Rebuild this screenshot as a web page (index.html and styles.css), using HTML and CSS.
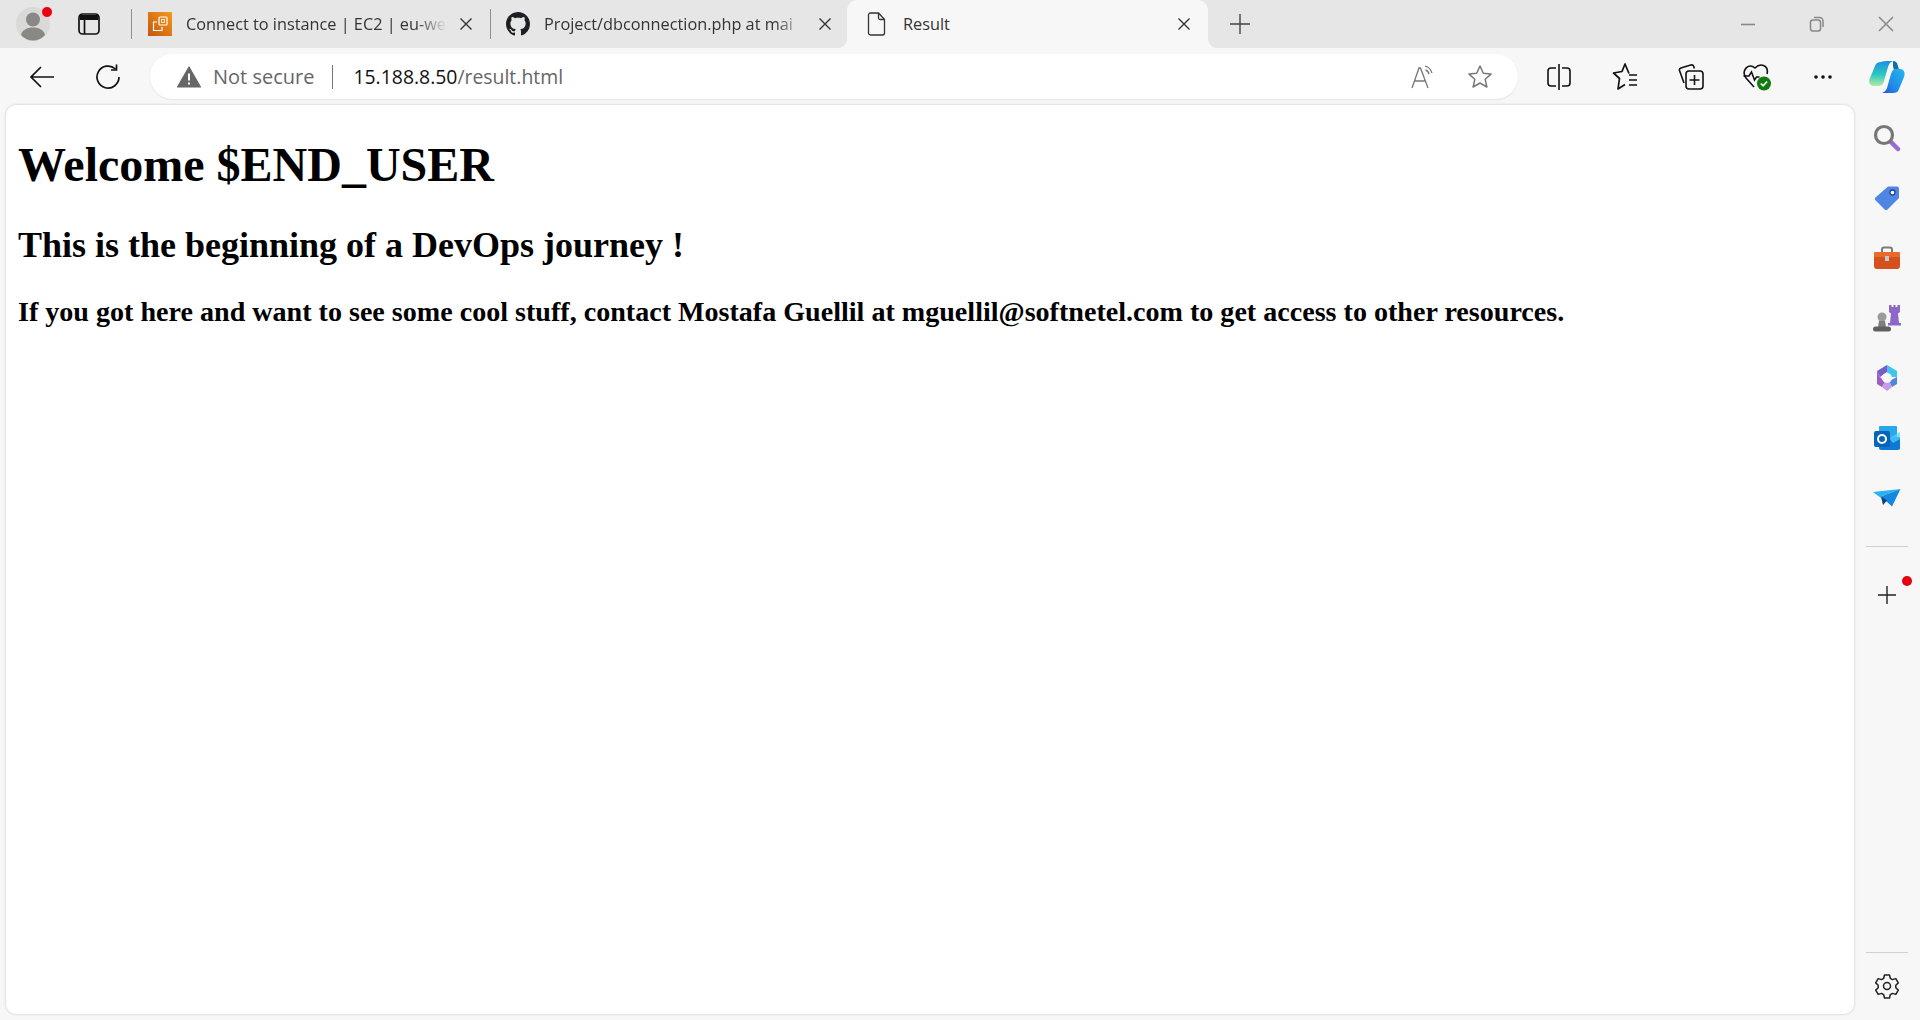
FILE: index.html
```html
<!DOCTYPE html>
<html>

<head>
    <title>Result</title>
    <link rel="stylesheet" href="styles.css">
</head>

<body>
    <div class="tabstrip">
        <div class="strip-btn profile">
            <svg width="38" height="38" viewBox="0 0 38 38">
                <circle cx="18" cy="19" r="17" fill="#d9d9d7" />
                <circle cx="18" cy="14.500" r="7" fill="#8a8885" />
                <path d="M6 30c1-5 6-7.500 12-7.500s11 2.500 12 7.500c-3 3.500-7 5.500-12 5.500S9 33.500 6 30z" fill="#8a8885" />
                <circle cx="32" cy="7" r="5.500" fill="#e60012" stroke="#e6e6e6" stroke-width="1" />
            </svg>
        </div>
        <div class="strip-btn tabs-btn">
            <svg width="22" height="22" viewBox="0 0 22 22" fill="none" stroke="#111" stroke-width="1.700">
                <rect x="1" y="1" width="20" height="20" rx="3.500" />
                <path d="M6.500 7v14" />
                <path d="M2 2h18v5H2z" fill="#111" stroke="none" />
            </svg>
        </div>

        <div class="tab tab-one">
            <svg class="fav" width="24" height="24" viewBox="0 0 24 24" fill="none">
                <defs>
                    <linearGradient id="ec2" x1="0" y1="1" x2="1" y2="0">
                        <stop offset="0" stop-color="#c4570f" />
                        <stop offset="1" stop-color="#f39a1c" />
                    </linearGradient>
                </defs>
                <rect width="24" height="24" fill="url(#ec2)" />
                <rect x="11" y="5" width="8" height="8" rx="1" stroke="#fff" stroke-width="1.200" />
                <rect x="13.500" y="7.500" width="3" height="3" stroke="#fff" stroke-width="0.800" />
                <path d="M9 10H5.500v8.500H14V15" stroke="#fff" stroke-width="1.200" />
            </svg>
            <span class="tab-title">Connect to instance | EC2 | eu-we</span>
            <svg class="close" width="14" height="14" viewBox="0 0 14 14" stroke="#333" stroke-width="1.400">
                <path d="M1.500 1.500l11 11M12.500 1.500l-11 11" />
            </svg>
        </div>
        <div class="tab tab-two">
            <svg class="fav" width="24" height="24" viewBox="0 0 16 16" fill="#1b1f23">
                <path d="M8 0C3.580 0 0 3.580 0 8c0 3.540 2.290 6.530 5.470 7.590.4.070.55-.17.55-.38 0-.19-.01-.82-.01-1.490-2.010.37-2.530-.49-2.690-.94-.09-.23-.48-.94-.82-1.130-.28-.15-.68-.52-.01-.53.63-.01 1.080.58 1.230.82.72 1.210 1.870.87 2.330.66.07-.52.28-.87.51-1.070-1.780-.2-3.640-.89-3.640-3.950 0-.87.31-1.590.82-2.150-.08-.2-.36-1.020.08-2.120 0 0 .67-.21 2.200.82.64-.18 1.320-.27 2-.27s1.360.09 2 .27c1.530-1.040 2.200-.82 2.200-.82.44 1.100.16 1.920.08 2.120.51.56.82 1.270.82 2.150 0 3.070-1.870 3.750-3.650 3.950.29.25.54.73.54 1.480 0 1.070-.01 1.930-.01 2.200 0 .21.15.46.55.38A8.010 8.010 0 0 0 16 8c0-4.420-3.580-8-8-8z" />
            </svg>
            <span class="tab-title">Project/dbconnection.php at mai</span>
            <svg class="close" width="14" height="14" viewBox="0 0 14 14" stroke="#333" stroke-width="1.400">
                <path d="M1.500 1.500l11 11M12.500 1.500l-11 11" />
            </svg>
        </div>
        <div class="tab tab-active">
            <svg class="fav" width="20" height="24" viewBox="0 0 20 24" fill="none" stroke="#333" stroke-width="1.300">
                <path d="M3.500 1h8l6 6.500V21a2 2 0 0 1-2 2h-12a2 2 0 0 1-2-2V3a2 2 0 0 1 2-2z" />
                <path d="M11.500 1v5a1.500 1.500 0 0 0 1.500 1.500h4.500" />
            </svg>
            <span class="tab-title">Result</span>
            <svg class="close" width="14" height="14" viewBox="0 0 14 14" stroke="#333" stroke-width="1.400">
                <path d="M1.500 1.500l11 11M12.500 1.500l-11 11" />
            </svg>
        </div>
        <div class="new-tab">
            <svg width="22" height="22" viewBox="0 0 22 22" stroke="#444" stroke-width="1.400">
                <path d="M11 1v20M1 11h20" />
            </svg>
        </div>

        <div class="window-btns">
            <svg width="16" height="16" viewBox="0 0 16 16" stroke="#888" stroke-width="1.600">
                <path d="M1 8.500h14" />
            </svg>
            <svg width="16" height="18" viewBox="0 0 16 18" fill="none" stroke="#888" stroke-width="1.500">
                <rect x="1.500" y="5" width="10" height="11" rx="2.500" />
                <path d="M5 2.500h5.500A3.500 3.500 0 0 1 14 6v6" />
            </svg>
            <svg width="16" height="16" viewBox="0 0 16 16" stroke="#888" stroke-width="1.500">
                <path d="M1 1l14 14M15 1L1 15" />
            </svg>
        </div>
    </div>

    <div class="toolbar">
        <svg class="nav-back" width="26" height="24" viewBox="0 0 26 24" fill="none" stroke="#111" stroke-width="1.700">
            <path d="M25 12H2M12 2L2 12l10 10" />
        </svg>
        <svg class="nav-reload" width="26" height="26" viewBox="0 0 26 26" fill="none" stroke="#111" stroke-width="1.700">
            <path d="M20.500 5A11 11 0 1 0 24 13" />
            <path d="M21.500 0.500V6H16" />
        </svg>

        <div class="address">
            <svg width="24" height="22" viewBox="0 0 24 22">
                <path d="M12 1L23.500 21H.5z" fill="#666" stroke="#666" stroke-linejoin="round" stroke-width="1.200" />
                <path d="M12 7.500v7M12 16.500v2" stroke="#fff" stroke-width="2" />
            </svg>
            <span class="not-secure">Not secure</span>
            <span class="addr-sep"></span>
            <span class="url"><span class="host">15.188.8.50</span>/result.html</span>
            <svg class="read-aloud" width="24" height="24" viewBox="0 0 24 24" fill="none" stroke="#777" stroke-width="1.300">
                <path d="M1 23L8 3h1.500L17 23M4 16h10.500" />
                <path d="M14 1c3.500 1 6 3.500 7 7M14.500 5c2 .5 3 2 3.500 4" />
            </svg>
            <svg class="star" width="26" height="26" viewBox="0 0 26 26" fill="none" stroke="#777" stroke-width="1.500">
                <path d="M13 2l3.300 7.300 7.700.8-5.800 5.200 1.700 7.700-6.900-4-6.900 4 1.700-7.700L2 10.100l7.700-.8z" stroke-linejoin="round" />
            </svg>
        </div>

        <div class="tools">
            <svg width="24" height="26" viewBox="0 0 24 26" fill="none" stroke="#111" stroke-width="1.600">
                <path d="M12 0v26" />
                <path d="M9 4H4a3 3 0 0 0-3 3v12a3 3 0 0 0 3 3h5M15 4h5a3 3 0 0 1 3 3v12a3 3 0 0 1-3 3h-5" />
            </svg>
            <svg width="26" height="28" viewBox="0 0 26 28" fill="none" stroke="#111" stroke-width="1.700">
                <path d="M17 10.500L13 1l-3 7.500L1.500 10l6 5.500L6 26l7-4.500" stroke-linejoin="round" />
                <path d="M17 12h8M17 17h8M17 22h8" />
            </svg>
            <svg width="26" height="28" viewBox="0 0 26 28" fill="none" stroke="#111" stroke-width="1.600">
                <path d="M6 20L1.500 7.500a2 2 0 0 1 1.300-2.500l10-3a2.500 2.500 0 0 1 3 1.500l.5 2" />
                <rect x="8" y="8" width="17" height="18" rx="3" />
                <path d="M16.500 12v10M11.500 17h10" />
            </svg>
            <svg width="30" height="28" viewBox="0 0 30 28" fill="none">
                <path d="M12 24L4 15C-1 8 6-1 13 5c6-6 14-2 12 6" stroke="#111" stroke-width="1.600" />
                <path d="M1.500 13H7l2.500-4 3 8 2-3h3" stroke="#111" stroke-width="1.500" />
                <circle cx="22" cy="20.500" r="7" fill="#107c10" />
                <path d="M18.800 20.500l2.300 2.300 4-4.300" stroke="#fff" stroke-width="1.700" />
            </svg>
            <svg width="20" height="6" viewBox="0 0 20 6" fill="#111">
                <circle cx="3" cy="3" r="1.800" />
                <circle cx="10" cy="3" r="1.800" />
                <circle cx="17" cy="3" r="1.800" />
            </svg>
        </div>
        <svg class="copilot" width="36" height="32" viewBox="0 0 36 32">
            <defs>
                <linearGradient id="copA" x1="0" y1="0" x2="0" y2="1">
                    <stop offset="0" stop-color="#1d8fe0" />
                    <stop offset="0.55" stop-color="#2dc9c4" />
                    <stop offset="1" stop-color="#b5e9a0" />
                </linearGradient>
                <linearGradient id="copB" x1="1" y1="0" x2="0" y2="1">
                    <stop offset="0" stop-color="#27b6f0" />
                    <stop offset="0.6" stop-color="#1f8ce8" />
                    <stop offset="1" stop-color="#2457d0" />
                </linearGradient>
            </defs>
            <path d="M24 0c2.500 0 4 1.500 4.500 3.500L30 9h-5l-1-4z" fill="#0f6f9e" />
            <path d="M12 1c2-1 4-1 12-1-3 1-4 3-5 6l-4 14c-1 4-3 5-6 5H5c-4 0-6-4-4-8L6 5c1-3 3-4 6-4z" fill="url(#copA)" />
            <path d="M27 8h4c4 0 5.500 4 4 8l-5 12c-1 3-3 4-6 4H13c3-1 4-3 5-5l4-14c1-3 2-5 5-5z" fill="url(#copB)" />
        </svg>
    </div>

    <div class="main">
        <div class="page">
            <h1>Welcome $END_USER</h1>
            <h2>This is the beginning of a DevOps journey !</h2>
            <h3>If you got here and want to see some cool stuff, contact Mostafa Guellil at mguellil@softnetel.com to get access to other resources.</h3>
        </div>

        <div class="sidebar">
            <div class="side-apps">
                <div class="side-icon">
                    <svg width="28" height="28" viewBox="0 0 28 28" fill="none">
                        <path d="M18 18l7 7" stroke="#9a6bd0" stroke-width="4.500" stroke-linecap="round" />
                        <circle cx="11" cy="11" r="8.500" stroke="#777" stroke-width="3.200" />
                    </svg>
                </div>
                <div class="side-icon">
                    <svg width="26" height="26" viewBox="0 0 26 26">
                        <path d="M14 1.500h9a2 2 0 0 1 2 2V13L13.500 24.500a2 2 0 0 1-2.800 0L1.500 15.300a2 2 0 0 1 0-2.800z" fill="#4f86e4" />
                        <circle cx="18.500" cy="7.500" r="2.500" fill="#fff" stroke="#27409a" stroke-width="1.300" />
                    </svg>
                </div>
                <div class="side-icon">
                    <svg width="28" height="24" viewBox="0 0 28 24">
                        <path d="M9 7V3.500A2 2 0 0 1 11 1.500h6a2 2 0 0 1 2 2V7" fill="none" stroke="#7c7c7c" stroke-width="2" />
                        <path d="M2 6h24a1 1 0 0 1 1 1v4H1V7a1 1 0 0 1 1-1z" fill="#ea6a2c" />
                        <path d="M1 11h26v9a3 3 0 0 1-3 3H4a3 3 0 0 1-3-3z" fill="#d4501c" />
                        <rect x="12" y="10" width="4" height="5" fill="#c8c8c8" />
                    </svg>
                </div>
                <div class="side-icon">
                    <svg width="28" height="28" viewBox="0 0 28 28">
                        <path d="M16 1h2.500v2h2V1h2v2h2V1H27v7l-2 1.500L26 19h2v2.500H15V19h2l1-9.500L16 8z" fill="#8d68c8" />
                        <circle cx="9" cy="13" r="4.500" fill="#9b9b9b" />
                        <path d="M6 17h6l1 6H5z" fill="#7e7e7e" />
                        <rect x="0" y="22.500" width="18" height="5" rx="2.500" fill="#606060" />
                    </svg>
                </div>
                <div class="side-icon">
                    <svg width="26" height="28" viewBox="0 0 26 28">
                        <path d="M13 1L3 7l3 6 7-5z" fill="#7a5cc8" />
                        <path d="M13 1l10 6v6l-6 0-4-5z" fill="#3fc6ee" />
                        <path d="M23 13v7l-5 3-3-6z" fill="#4f86dc" />
                        <path d="M3 7v13l5 3 3-5-5-5z" fill="#a05cc4" />
                        <path d="M8 23l5 4 5-4-3-6h-4z" fill="#c49be4" />
                        <circle cx="13" cy="14" r="5" fill="#f7f7f7" />
                    </svg>
                </div>
                <div class="side-icon">
                    <svg width="26" height="26" viewBox="0 0 26 26">
                        <rect x="5" y="1" width="18" height="12" rx="1" fill="#28a8ea" />
                        <path d="M5 12h21v11a2 2 0 0 1-2 2H7a2 2 0 0 1-2-2z" fill="#0f78d4" />
                        <path d="M15 13l11-6v7l-7 4z" fill="#50d9ff" opacity="0.7" />
                        <rect x="0" y="6" width="16" height="16" rx="2" fill="#0364b8" />
                        <circle cx="8" cy="14" r="4" fill="none" stroke="#fff" stroke-width="2" />
                    </svg>
                </div>
                <div class="side-icon">
                    <svg width="28" height="20" viewBox="0 0 28 20">
                        <path d="M0 4L27.500 1 8 8.500 12 13z" fill="#29b3f0" />
                        <path d="M27.500 1L19 18.500 8 8.500z" fill="#1488e0" />
                        <path d="M8 8.500L10 17l4-4.500z" fill="#123d7a" />
                    </svg>
                </div>
            </div>
            <div class="side-line side-line-top"></div>
            <div class="side-add">
                <svg width="18" height="18" viewBox="0 0 18 18" stroke="#222" stroke-width="1.400">
                    <path d="M9 0v18M0 9h18" />
                </svg>
                <span class="red-dot"></span>
            </div>
            <div class="side-spacer"></div>
            <div class="side-line"></div>
            <div class="side-gear">
                <svg width="26" height="26" viewBox="0 0 26 26" fill="none" stroke="#222" stroke-width="1.500" stroke-linejoin="round">
                    <path d="M10.500 2h5l.8 3.300 2.200 1.300 3.300-1 2.500 4.300-2.500 2.300v2.600l2.500 2.300-2.500 4.300-3.300-1-2.200 1.300-.8 3.300h-5l-.8-3.300-2.200-1.300-3.300 1-2.500-4.300 2.500-2.300v-2.600L1.700 9.900l2.500-4.300 3.300 1 2.200-1.300z" />
                    <circle cx="13" cy="13" r="3.500" />
                </svg>
            </div>
        </div>
    </div>
</body>

</html>
```

FILE: styles.css
```css
html, body {
    margin: 0;
    height: 1020px;
    overflow: hidden;
    background: #f7f7f7;
}

body {
    display: flex;
    flex-direction: column;
    font-family: "Open Sans", "Noto Sans", sans-serif;
}

svg {
    display: block;
    flex: none;
}

/* tab strip */
.tabstrip {
    display: flex;
    align-items: center;
    height: 48px;
    background: #e6e6e6;
}

.strip-btn {
    display: flex;
    justify-content: center;
}

.profile {
    width: 56px;
    margin-left: 6px;
}

.tabs-btn {
    width: 42px;
    margin-left: 6px;
    margin-right: 21px;
}

.tab {
    display: flex;
    align-items: center;
    height: 48px;
    box-sizing: border-box;
    font-size: 16.3px;
    color: #333;
}

.tab-one {
    width: 359px;
    padding: 0 17px;
    background: linear-gradient(#8f8f8f, #8f8f8f) left center / 1px 30px no-repeat;
}

.tab-two {
    width: 357px;
    padding: 0 15px 0 16px;
    background: linear-gradient(#8f8f8f, #8f8f8f) left center / 1px 30px no-repeat;
}

.tab-active {
    position: relative;
    width: 361px;
    padding: 0 17px 0 20px;
    background: #f7f7f7;
    border-radius: 10px 10px 0 0;
}

/* little curves where the active tab meets the toolbar */
.tab-active::before,
.tab-active::after {
    content: "";
    position: absolute;
    bottom: 0;
    width: 10px;
    height: 10px;
}

.tab-active::before {
    left: -10px;
    background: radial-gradient(circle at 0 0, #e6e6e6 10px, #f7f7f7 10.500px);
}

.tab-active::after {
    right: -10px;
    background: radial-gradient(circle at 100% 0, #e6e6e6 10px, #f7f7f7 10.500px);
}

.fav {
    margin-right: 14px;
}

.tab-active .fav {
    margin-right: 16px;
}

.tab-title {
    flex: 1;
    min-width: 0;
    white-space: nowrap;
    -webkit-mask-image: linear-gradient(90deg, #000 88%, transparent);
    mask-image: linear-gradient(90deg, #000 88%, transparent);
}

.tab-active .tab-title {
    -webkit-mask-image: none;
    mask-image: none;
}

.close {
    margin-left: 12px;
}

.new-tab {
    margin-left: 21px;
}

.window-btns {
    display: flex;
    align-items: center;
    gap: 53px;
    margin-left: auto;
    margin-right: 26px;
}

/* toolbar */
.toolbar {
    display: flex;
    align-items: center;
    height: 57px;
}

.nav-back {
    margin-left: 29px;
}

.nav-reload {
    margin-left: 40px;
}

.address {
    display: flex;
    align-items: center;
    width: 1368px;
    height: 45px;
    box-sizing: border-box;
    margin-left: 29px;
    padding: 0 25px 0 27px;
    background: #fff;
    border-radius: 23px;
    box-shadow: 0 1px 2px rgba(0, 0, 0, 0.08);
    font-size: 20px;
    color: #666;
}

.not-secure {
    margin-left: 12px;
}

.addr-sep {
    width: 1px;
    height: 24px;
    margin: 0 20px 0 18px;
    background: #777;
}

.url {
    flex: 1;
    font-size: 19.4px;
}

.host {
    color: #111;
}

.star {
    margin-left: 32px;
}

.tools {
    display: grid;
    grid-template-columns: repeat(5, 66px);
    justify-items: center;
    align-items: center;
    margin-left: 8px;
}

.copilot {
    margin-left: 13px;
}

/* page and side panel */
.main {
    display: flex;
    flex: 1;
    min-height: 0;
    padding-bottom: 6px;
}

.page {
    flex: 1;
    margin-left: 6px;
    padding: 0 12px;
    background: #fff;
    border-radius: 10px;
    box-shadow: 0 0 3px rgba(0, 0, 0, 0.2);
    color: #000;
    font-family: "Liberation Serif", "Times New Roman", serif;
}

.page h1 {
    margin: 32px 0;
    font-size: 48px;
}

.page h2 {
    margin: 30px 0;
    font-size: 36px;
}

.page h3 {
    margin: 28px 0;
    font-size: 28.08px;
}

.sidebar {
    display: flex;
    flex-direction: column;
    align-items: center;
    width: 66px;
    flex: none;
}

.side-apps {
    display: flex;
    flex-direction: column;
    margin-top: 3px;
}

.side-icon {
    display: flex;
    align-items: center;
    justify-content: center;
    width: 40px;
    height: 60px;
}

.side-line {
    width: 42px;
    height: 1px;
    background: #d0d0d0;
    flex: none;
}

.side-line-top {
    margin-top: 18px;
}

.side-add {
    position: relative;
    margin-top: 39px;
}

.red-dot {
    position: absolute;
    top: -10px;
    right: -16px;
    width: 10px;
    height: 10px;
    border-radius: 50%;
    background: #e60012;
}

.side-spacer {
    flex: 1;
}

.side-gear {
    margin: 20px 0 15px;
}
```
